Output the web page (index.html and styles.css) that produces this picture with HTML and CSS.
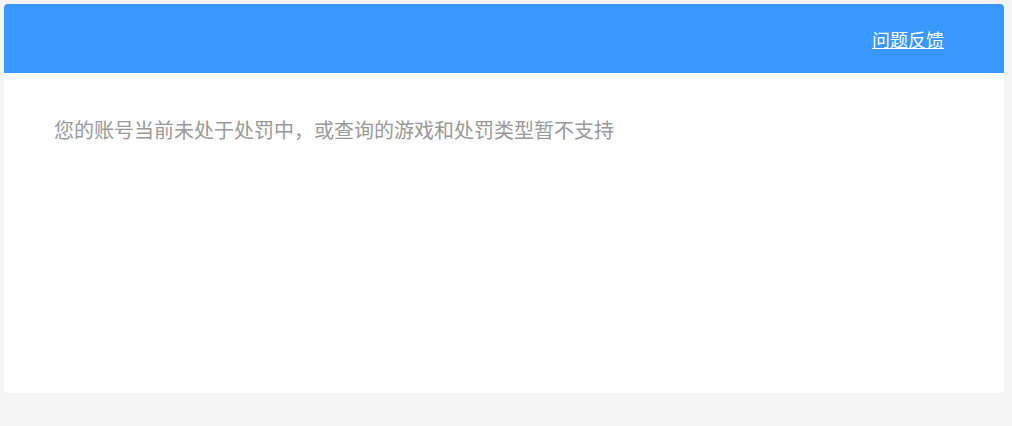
FILE: index.html
```html
<!DOCTYPE html>
<html lang="zh-CN">
<head>
    <meta charset="UTF-8">
    <title>处罚查询</title>
    <link rel="stylesheet" href="styles.css">
</head>
<body>
    <div class="card">
        <div class="header">
            <a class="feedback" href="#">问题反馈</a>
        </div>
        <div class="content">
            <p class="tip">您的账号当前未处于处罚中，或查询的游戏和处罚类型暂不支持</p>
        </div>
    </div>
</body>
</html>
```

FILE: styles.css
```css
body {
    margin: 0;
    padding: 4px;
    background-color: #f5f5f5;
    font-family: "Microsoft YaHei", "Noto Sans CJK SC", sans-serif;
}

.card {
    width: 1000px;
    background: #fff;
    border-radius: 4px;
}

.header {
    height: 69px;
    display: flex;
    align-items: center;
    justify-content: flex-end;
    padding: 0 60px;
    background-color: #3898ff;
    border-radius: 4px 4px 0 0;
}

.feedback {
    color: #fff;
    font-size: 18px;
    line-height: 20px;
    text-decoration: underline;
}

.content {
    height: 320px;
    box-sizing: border-box;
    padding: 47px 50px;
}

.tip {
    margin: 0;
    font-size: 20px;
    line-height: 20px;
    color: #999;
}
```
